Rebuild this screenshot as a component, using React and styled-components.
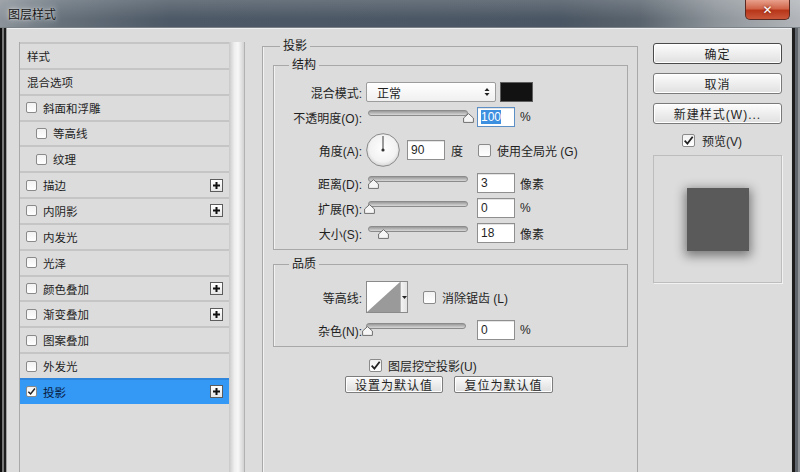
import styled, { createGlobalStyle } from 'styled-components';

const GlobalStyle = createGlobalStyle`
  html, body {
    margin: 0;
    padding: 0;
    background: #dcdcdc;
  }
  body {
    font-family: 'Liberation Sans', 'Noto Sans CJK SC', sans-serif;
    font-size: 12px;
    color: #1f1f1f;
  }
  * {
    box-sizing: border-box;
  }
`;

const Window = styled.div`
  width: 800px;
  height: 472px;
  overflow: hidden;
  display: flex;
  flex-direction: column;
`;

const TitleBar = styled.div`
  height: 28px;
  flex: none;
  display: flex;
  justify-content: space-between;
  padding-left: 8px;
  border-bottom: 1px solid #7b8288;
  background: linear-gradient(to bottom, rgba(255, 255, 255, 0.16), rgba(255, 255, 255, 0) 70%),
    linear-gradient(to right, #8c939a 0, #66717b 60px, #4d5966 170px, #4a5663 560px, #5a646e 640px, #8c9399 715px, #b2b6ba 800px);
`;

const Title = styled.span`
  align-self: center;
  font-size: 12px;
  color: #151515;
  text-shadow: 0 0 6px rgba(255, 255, 255, 0.85), 0 0 2px rgba(255, 255, 255, 0.6);
`;

const CloseButton = styled.div`
  width: 45px;
  height: 20px;
  margin-right: 10px;
  border: 1px solid #5a2a22;
  border-top: none;
  border-radius: 0 0 5px 5px;
  background: linear-gradient(to bottom, #e8a08c 0, #d0654a 45%, #b8361a 55%, #c9573a 100%);
  display: flex;
  align-items: center;
  justify-content: center;
  color: #fff;
  font-family: 'DejaVu Sans', sans-serif;
  font-weight: bold;
  font-size: 12px;
  text-shadow: 0 0 3px #6b1b0b;
`;

const Body = styled.div`
  flex: 1;
  display: flex;
  min-height: 0;
`;

const LeftFrame = styled.div`
  width: 7px;
  flex: none;
  background: linear-gradient(to right, #0e0e0e 0 2px, #777 2px 4px, #1c1c1c 4px 6px, #a0a0a0 6px 7px);
`;

const RightFrame = styled.div`
  width: 9px;
  flex: none;
  background: linear-gradient(to right, #d6d6d6 0 1px, #1e1e1e 1px 4px, #5f656b 4px 7px, #8e9398 7px 9px);
`;

const Content = styled.div`
  flex: 1;
  display: flex;
  align-items: flex-start;
  padding-left: 12px;
  background: #dcdcdc;
  border-top: 1px solid #eef0f2;
`;

/* ---------- left list ---------- */

const ListColumn = styled.div`
  width: 226px;
  flex: none;
  align-self: stretch;
  margin-top: 13px;
  display: flex;
`;

const List = styled.div`
  width: 210px;
  border-left: 1px solid #a9a9a9;
  background: #dcdcdc;
`;

const ListRow = styled.div`
  height: 25.85px;
  display: flex;
  align-items: center;
  border-top: 2px solid ${(p) => (p.$active ? '#2f86dc' : '#c5c5c5')};
  padding-left: ${(p) => (p.$header ? 7 : p.$indent ? 16 : 6)}px;
  background: ${(p) => (p.$active ? '#3399f5' : 'transparent')};
  color: ${(p) => (p.$active ? '#08183a' : '#1f1f1f')};
  font-size: 11.5px;
`;

const RowText = styled.span`
  margin-left: ${(p) => (p.$header ? 0 : 6)}px;
`;

const PlusBox = styled.span`
  width: 13px;
  height: 13px;
  margin-left: auto;
  margin-right: 6px;
  border: 1px solid #5c5c5c;
  background: linear-gradient(#ffffff, #e6e6e6);
  display: flex;
  align-items: center;
  justify-content: center;
`;

const Scrollbar = styled.div`
  width: 16px;
  background: linear-gradient(to right, #c8c8c8 0, #eeeeee 35%, #f7f7f7 60%, #d2d2d2 100%);
  border-right: 1px solid #b2b2b2;
`;

/* ---------- checkbox ---------- */

const Box = styled.span`
  width: ${(p) => p.$size}px;
  height: ${(p) => p.$size}px;
  flex: none;
  border: 1px solid #8a8a8a;
  border-radius: 2px;
  background: linear-gradient(#f2f2f2, #ffffff);
  display: flex;
  align-items: center;
  justify-content: center;
  margin-left: ${(p) => p.$ml || 0}px;
`;

const CheckBox = ({ size = 13, checked, ml }) => (
  <Box $size={size} $ml={ml}>
    {checked && (
      <svg width={size - 2} height={size - 2} viewBox="0 0 10 10">
        <path d="M1.5 5.2 L4 7.8 L8.8 1.6" fill="none" stroke="#222" strokeWidth="1.6" />
      </svg>
    )}
  </Box>
);

const Plus = () => (
  <PlusBox>
    <svg width="9" height="9" viewBox="0 0 9 9">
      <path d="M4.5 1 V8 M1 4.5 H8" stroke="#111" strokeWidth="2" />
    </svg>
  </PlusBox>
);

/* ---------- middle group boxes ---------- */

const Middle = styled.div`
  width: 376px;
  flex: none;
  margin-left: 17px;
  margin-top: 8px;
`;

const Group = styled.fieldset`
  margin: ${(p) => p.$mt || 0}px 0 0 0;
  padding: 0;
  min-width: 0;
  border: 1px solid #a8a8a8;
  box-shadow: inset 1px 0 0 #f2f2f2;
  height: ${(p) => (p.$tall ? '600px' : 'auto')};
`;

const Legend = styled.legend`
  margin-left: ${(p) => p.$ml}px;
  padding: 0 3px;
  line-height: 18px;
  font-size: 12px;
  color: #1a1a1a;
`;

const GroupBody = styled.div`
  padding: ${(p) => p.$pad};
  display: flex;
  flex-direction: column;
`;

const Row = styled.div`
  display: flex;
  align-items: center;
  height: ${(p) => p.$h || 20}px;
  margin-top: ${(p) => (p.$mt === undefined ? 5 : p.$mt)}px;
  margin-left: ${(p) => p.$ml || 0}px;
`;

const Label = styled.span`
  width: 88px;
  flex: none;
  text-align: right;
  margin-right: 4px;
  white-space: nowrap;
`;

const TextInput = styled.div`
  width: 38px;
  height: 20px;
  flex: none;
  background: #fff;
  border: 1px solid ${(p) => (p.$focus ? '#5b8fc6' : '#8f8f8f')};
  box-shadow: inset 0 1px 0 #e4e4e4;
  padding-left: 3px;
  display: flex;
  align-items: center;
  margin-left: ${(p) => p.$ml || 0}px;
`;

const Selected = styled.span`
  background: #3d8fe0;
  color: #ffffff;
`;

const Unit = styled.span`
  margin-left: ${(p) => p.$ml || 5}px;
  white-space: nowrap;
`;

const SelectBox = styled.div`
  width: 130px;
  height: 20px;
  border: 1px solid #9c9c9c;
  border-radius: 2px;
  background: linear-gradient(#ffffff, #f0f0f0);
  display: flex;
  align-items: center;
  justify-content: space-between;
  padding: 0 5px 0 10px;
`;

const Swatch = styled.div`
  width: 33px;
  height: 20px;
  margin-left: 4px;
  background: #121212;
  border: 1px solid #5e5e5e;
`;

const SliderWrap = styled.div`
  width: 104px;
  height: 20px;
  flex: none;
  position: relative;
  margin-right: 7px;
  margin-left: ${(p) => p.$ml || 0}px;
`;

const Track = styled.div`
  width: 100px;
  height: 6px;
  margin: 3px 0 0 2px;
  border: 1px solid #8b8b8b;
  border-radius: 3px;
  background: linear-gradient(#999999, #d8d8d8);
`;

const Thumb = styled.svg`
  position: absolute;
  top: 6px;
  left: ${(p) => 2 + p.$pos - 5.5}px;
`;

const Slider = ({ value, ml }) => (
  <SliderWrap $ml={ml}>
    <Track />
    <Thumb $pos={value} width="11" height="10" viewBox="0 0 11 10">
      <path d="M5.5 0.6 L10.4 5 L10.4 9.4 L0.6 9.4 L0.6 5 Z" fill="#f6f6f6" stroke="#6e6e6e" strokeWidth="1" />
    </Thumb>
  </SliderWrap>
);

const Dial = () => (
  <svg width="34" height="36" viewBox="0 0 34 36">
    <defs>
      <radialGradient id="dialFill" cx="50%" cy="45%" r="55%">
        <stop offset="0%" stopColor="#ffffff" />
        <stop offset="75%" stopColor="#f2f2f2" />
        <stop offset="100%" stopColor="#d6d6d6" />
      </radialGradient>
    </defs>
    <circle cx="17" cy="18" r="16.3" fill="url(#dialFill)" stroke="#8a8a8a" strokeWidth="1" />
    <line x1="17" y1="18" x2="17" y2="4" stroke="#3a3a3a" strokeWidth="1" />
    <circle cx="17" cy="18" r="1.6" fill="#333" />
  </svg>
);

const Contour = styled.div`
  display: flex;
  height: 32px;
  border: 1px solid #8a8a8a;
  background: #fff;
`;

const ContourDrop = styled.div`
  width: 7px;
  border-left: 1px solid #b4b4b4;
  background: linear-gradient(to right, #f4f4f4, #e2e2e2);
  display: flex;
  align-items: center;
  justify-content: center;
`;

const SmallButton = styled.div`
  width: ${(p) => p.$w}px;
  height: 17px;
  margin-left: ${(p) => p.$ml || 0}px;
  border: 1px solid #7d7d7d;
  border-radius: 2px;
  background: linear-gradient(#fbfbfb, #ececec 50%, #dedede);
  box-shadow: inset 0 0 0 1px #ffffff;
  display: flex;
  align-items: center;
  justify-content: center;
  letter-spacing: 1px;
`;

/* ---------- right column ---------- */

const RightColumn = styled.div`
  width: 129px;
  flex: none;
  margin-left: 15px;
  margin-top: 14px;
  display: flex;
  flex-direction: column;
`;

const DialogButton = styled.div`
  height: 21px;
  margin-top: ${(p) => p.$mt || 0}px;
  border: 1px solid ${(p) => (p.$primary ? '#4a4a4a' : '#7a7a7a')};
  border-radius: 3px;
  background: linear-gradient(#fdfdfd, #eeeeee 50%, #e0e0e0);
  box-shadow: inset 0 0 0 1px #ffffff;
  display: flex;
  align-items: center;
  justify-content: center;
  letter-spacing: 1px;
`;

const PreviewToggle = styled.div`
  height: 16px;
  margin-top: 8px;
  display: flex;
  align-items: center;
  padding-left: 29px;
`;

const PreviewBox = styled.div`
  height: 128px;
  margin-top: 7px;
  border: 1px solid #bdbdbd;
  box-shadow: 1px 1px 0 #f2f2f2;
  display: flex;
  align-items: center;
  justify-content: center;
`;

const PreviewSquare = styled.div`
  width: 62px;
  height: 63px;
  background: #5a5a5a;
  box-shadow: 0 3px 10px 2px rgba(0, 0, 0, 0.45);
`;

const listItems = [
  { label: '样式', header: true },
  { label: '混合选项', header: true },
  { label: '斜面和浮雕' },
  { label: '等高线', indent: true },
  { label: '纹理', indent: true },
  { label: '描边', plus: true },
  { label: '内阴影', plus: true },
  { label: '内发光' },
  { label: '光泽' },
  { label: '颜色叠加', plus: true },
  { label: '渐变叠加', plus: true },
  { label: '图案叠加' },
  { label: '外发光' },
  { label: '投影', plus: true, checked: true, active: true },
];

const App = () => {
  return (
    <Window>
      <GlobalStyle />
      <TitleBar>
        <Title>图层样式</Title>
        <CloseButton>✕</CloseButton>
      </TitleBar>
      <Body>
        <LeftFrame />
        <Content>
          <ListColumn>
            <List>
              {listItems.map((item) => (
                <ListRow key={item.label} $header={item.header} $indent={item.indent} $active={item.active}>
                  {!item.header && <CheckBox size={11} checked={item.checked} />}
                  <RowText $header={item.header}>{item.label}</RowText>
                  {item.plus && <Plus />}
                </ListRow>
              ))}
            </List>
            <Scrollbar />
          </ListColumn>

          <Middle>
            <Group $tall>
              <Legend $ml={17}>投影</Legend>
              <GroupBody $pad="0 9px 0 10px">
                <Group $mt={1}>
                  <Legend $ml={15}>结构</Legend>
                  <GroupBody $pad="8px 0 6px 0">
                    <Row $mt={0}>
                      <Label>混合模式:</Label>
                      <SelectBox>
                        <span>正常</span>
                        <svg width="6" height="10" viewBox="0 0 6 10">
                          <path d="M0.5 4 L3 1 L5.5 4 Z M0.5 6 L3 9 L5.5 6 Z" fill="#222" />
                        </svg>
                      </SelectBox>
                      <Swatch />
                    </Row>
                    <Row>
                      <Label>不透明度(O):</Label>
                      <Slider value={100} />
                      <TextInput $focus>
                        <Selected>100</Selected>
                      </TextInput>
                      <Unit>%</Unit>
                    </Row>
                    <Row $h={36}>
                      <Label>角度(A):</Label>
                      <Dial />
                      <TextInput $ml={7}>90</TextInput>
                      <Unit $ml={6}>度</Unit>
                      <CheckBox ml={15} />
                      <Unit $ml={6}>使用全局光 (G)</Unit>
                    </Row>
                    <Row>
                      <Label>距离(D):</Label>
                      <Slider value={5} />
                      <TextInput>3</TextInput>
                      <Unit>像素</Unit>
                    </Row>
                    <Row>
                      <Label>扩展(R):</Label>
                      <Slider value={1} />
                      <TextInput>0</TextInput>
                      <Unit>%</Unit>
                    </Row>
                    <Row>
                      <Label>大小(S):</Label>
                      <Slider value={15} />
                      <TextInput>18</TextInput>
                      <Unit>像素</Unit>
                    </Row>
                  </GroupBody>
                </Group>

                <Group $mt={5}>
                  <Legend $ml={15}>品质</Legend>
                  <GroupBody $pad="8px 0 6px 0">
                    <Row $h={32} $mt={0}>
                      <Label>等高线:</Label>
                      <Contour>
                        <svg width="33" height="30" viewBox="0 0 33 30">
                          <path d="M0 30 L33 0 L33 30 Z" fill="#9a9a9a" />
                        </svg>
                        <ContourDrop>
                          <svg width="5" height="3" viewBox="0 0 5 3">
                            <path d="M0 0 L5 0 L2.5 3 Z" fill="#222" />
                          </svg>
                        </ContourDrop>
                      </Contour>
                      <CheckBox ml={15} />
                      <Unit $ml={6}>消除锯齿 (L)</Unit>
                    </Row>
                    <Row $mt={7}>
                      <Label>杂色(N):</Label>
                      <Slider value={1} ml={-2} />
                      <TextInput $ml={2}>0</TextInput>
                      <Unit>%</Unit>
                    </Row>
                  </GroupBody>
                </Group>

                <Row $h={16} $mt={10} $ml={96}>
                  <CheckBox checked />
                  <Unit $ml={6}>图层挖空投影(U)</Unit>
                </Row>
                <Row $h={17} $mt={3} $ml={72}>
                  <SmallButton $w={98}>设置为默认值</SmallButton>
                  <SmallButton $w={99} $ml={11}>复位为默认值</SmallButton>
                </Row>
              </GroupBody>
            </Group>
          </Middle>

          <RightColumn>
            <DialogButton $primary>确定</DialogButton>
            <DialogButton $mt={9}>取消</DialogButton>
            <DialogButton $mt={9}>新建样式(W)...</DialogButton>
            <PreviewToggle>
              <CheckBox checked />
              <Unit $ml={7}>预览(V)</Unit>
            </PreviewToggle>
            <PreviewBox>
              <PreviewSquare />
            </PreviewBox>
          </RightColumn>
        </Content>
        <RightFrame />
      </Body>
    </Window>
  );
};

export default App;
